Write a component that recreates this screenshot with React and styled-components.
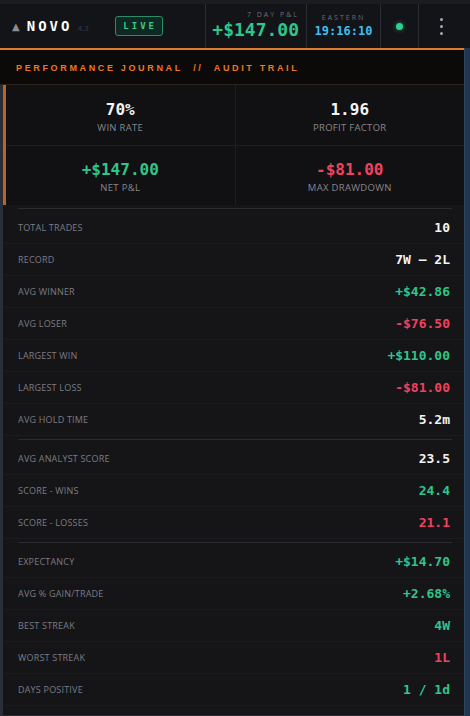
import React from 'react';
import styled, { createGlobalStyle } from 'styled-components';

const mono = `'DejaVu Sans Mono', 'Liberation Mono', monospace`;
const sans = `'Open Sans', 'Noto Sans', sans-serif`;

const GREEN = '#2fc58b';
const RED = '#f0425e';
const WHITE = '#f3f3f3';

const GlobalStyle = createGlobalStyle`
    html, body {
        margin: 0;
        padding: 0;
        height: 716px;
        overflow: hidden;
        background: #141519;
    }
    * { box-sizing: border-box; }
`;

const stats = [
    { value: '70%', label: 'Win Rate', tone: 'white' },
    { value: '1.96', label: 'Profit Factor', tone: 'white' },
    { value: '+$147.00', label: 'Net P&L', tone: 'green' },
    { value: '-$81.00', label: 'Max Drawdown', tone: 'red' },
];

const groups = [
    [
        ['Total Trades', '10', 'white'],
        ['Record', '7W – 2L', 'white'],
        ['Avg Winner', '+$42.86', 'green'],
        ['Avg Loser', '-$76.50', 'red'],
        ['Largest Win', '+$110.00', 'green'],
        ['Largest Loss', '-$81.00', 'red'],
        ['Avg Hold Time', '5.2m', 'white'],
    ],
    [
        ['Avg Analyst Score', '23.5', 'white'],
        ['Score - Wins', '24.4', 'green'],
        ['Score - Losses', '21.1', 'red'],
    ],
    [
        ['Expectancy', '+$14.70', 'green'],
        ['Avg % Gain/Trade', '+2.68%', 'green'],
        ['Best Streak', '4W', 'green'],
        ['Worst Streak', '1L', 'red'],
        ['Days Positive', '1 / 1d', 'green'],
    ],
];

const toneColor = tone => (tone === 'green' ? GREEN : tone === 'red' ? RED : WHITE);

const App = () => (
    <>
        <GlobalStyle />
        <Frame>
            <Header>
                <Brand>
                    <Caret>▲</Caret>
                    <Logo>NOVO</Logo>
                    <Version>4.3</Version>
                    <LiveBadge>LIVE</LiveBadge>
                </Brand>
                <PnlCell>
                    <TinyLabel>7 DAY P&amp;L</TinyLabel>
                    <PnlValue>+$147.00</PnlValue>
                </PnlCell>
                <ClockCell>
                    <TinyLabel>EASTERN</TinyLabel>
                    <Clock>19:16:10</Clock>
                </ClockCell>
                <DotCell>
                    <StatusDot />
                </DotCell>
                <MenuCell>
                    <span /><span /><span />
                </MenuCell>
            </Header>
            <Scroller>
                <Content>
                    <TitleBar>PERFORMANCE JOURNAL&nbsp;&nbsp;//&nbsp;&nbsp;AUDIT TRAIL</TitleBar>
                    <Body>
                        <StatGrid>
                            {stats.map(s => (
                                <StatCell key={s.label}>
                                    <StatValue tone={s.tone}>{s.value}</StatValue>
                                    <StatLabel>{s.label}</StatLabel>
                                </StatCell>
                            ))}
                        </StatGrid>
                        <Rows>
                            {groups.map((rows, gi) => (
                                <React.Fragment key={gi}>
                                    <Separator />
                                    {rows.map(([label, value, tone]) => (
                                        <Row key={label}>
                                            <RowLabel>{label}</RowLabel>
                                            <RowValue tone={tone}>{value}</RowValue>
                                        </Row>
                                    ))}
                                </React.Fragment>
                            ))}
                        </Rows>
                    </Body>
                </Content>
                <ScrollTrack />
            </Scroller>
        </Frame>
    </>
);

const Frame = styled.div`
    width: 470px;
    height: 716px;
    display: flex;
    flex-direction: column;
    background: #141519;
`;

const Header = styled.header`
    height: 48px;
    flex: none;
    display: flex;
    align-items: stretch;
    background: #131418;
    border-top: 4px solid #1b1c20;
    > * + * {
        border-left: 1px solid #2a2b31;
    }
`;

const Brand = styled.div`
    width: 205px;
    display: flex;
    align-items: center;
    padding-left: 12px;
`;

const Caret = styled.span`
    color: #8b8d93;
    font-size: 10px;
    font-family: 'DejaVu Sans', sans-serif;
    margin-right: 7px;
    margin-top: 1px;
`;

const Logo = styled.span`
    font-family: ${mono};
    font-weight: 700;
    font-size: 14px;
    letter-spacing: 3px;
    color: #ffffff;
`;

const Version = styled.span`
    font-family: ${sans};
    font-size: 8px;
    color: #3a3b41;
    margin-left: 5px;
    margin-top: 2px;
`;

const LiveBadge = styled.span`
    margin-left: 26px;
    width: 48px;
    height: 20px;
    display: flex;
    align-items: center;
    justify-content: center;
    border: 1px solid #2d8c68;
    border-radius: 3px;
    background: #0f2822;
    color: #3ccb8e;
    font-family: ${mono};
    font-weight: 700;
    font-size: 9px;
    letter-spacing: 3px;
    padding-left: 3px;
`;

const TinyLabel = styled.span`
    font-family: ${sans};
    font-size: 7px;
    letter-spacing: 2px;
    color: #6b6d73;
    line-height: 9px;
`;

const PnlCell = styled.div`
    width: 101px;
    display: flex;
    flex-direction: column;
    align-items: flex-end;
    justify-content: center;
    padding-right: 7px;
    padding-bottom: 2px;
`;

const PnlValue = styled.span`
    font-family: ${mono};
    font-weight: 700;
    font-size: 18px;
    line-height: 22px;
    color: ${GREEN};
`;

const ClockCell = styled.div`
    width: 74px;
    display: flex;
    flex-direction: column;
    align-items: center;
    justify-content: center;
    gap: 2px;
    padding-bottom: 2px;
`;

const Clock = styled.span`
    font-family: ${mono};
    font-weight: 700;
    font-size: 12px;
    line-height: 14px;
    color: #3cbff0;
`;

const DotCell = styled.div`
    width: 38px;
    display: flex;
    align-items: center;
    justify-content: center;
`;

const StatusDot = styled.span`
    width: 7px;
    height: 7px;
    border-radius: 50%;
    background: #2fd08f;
    box-shadow: 0 0 5px rgba(47, 208, 143, 0.6);
`;

const MenuCell = styled.div`
    flex: 1;
    display: flex;
    flex-direction: column;
    align-items: center;
    justify-content: center;
    gap: 4px;
    padding-right: 7px;
    span {
        width: 3px;
        height: 3px;
        border-radius: 50%;
        background: #a3a8b2;
    }
`;

const Scroller = styled.div`
    flex: 1;
    display: flex;
    min-height: 0;
`;

const Content = styled.div`
    flex: 1;
    display: flex;
    flex-direction: column;
`;

const ScrollTrack = styled.div`
    width: 6px;
    flex: none;
    background: #23364d;
    border-left: 1px solid #2c4563;
`;

const TitleBar = styled.div`
    height: 37px;
    display: flex;
    align-items: center;
    padding-left: 16px;
    padding-top: 1px;
    background: #0c0a09;
    border-top: 2px solid #e37b2c;
    border-bottom: 1px solid #2f2219;
    color: #ec7628;
    font-family: 'Liberation Sans', Arial, sans-serif;
    font-weight: 700;
    font-size: 9px;
    letter-spacing: 2.65px;
`;

const Body = styled.div`
    flex: 1;
    display: flex;
    flex-direction: column;
    background: #151518;
    border-left: 3px solid #2a2f37;
    border-bottom: 1px solid #2b2c31;
    padding-bottom: 8px;
`;

const StatGrid = styled.div`
    display: grid;
    grid-template-columns: 1fr 1fr;
    grid-template-rows: 1fr 1fr;
    border-left: 3px solid #b8652c;
    gap: 1px;
    background-color: #1d1e22;
    height: 120px;
`;

const StatCell = styled.div`
    display: flex;
    flex-direction: column;
    align-items: center;
    justify-content: center;
    gap: 3px;
    background: #111114;
    padding-top: 5px;
`;

const StatValue = styled.span`
    font-family: ${mono};
    font-weight: 700;
    font-size: 16px;
    line-height: 18px;
    color: ${p => toneColor(p.tone)};
`;

const StatLabel = styled.span`
    font-family: ${sans};
    font-size: 9.5px;
    line-height: 12px;
    letter-spacing: 0.3px;
    text-transform: uppercase;
    color: #85878d;
`;

const Rows = styled.div`
    display: flex;
    flex-direction: column;
`;

const Separator = styled.div`
    height: 1px;
    margin: 3px 12px 3px 15px;
    background: #2b2c31;
`;

const Row = styled.div`
    height: 32px;
    display: flex;
    align-items: center;
    justify-content: space-between;
    padding: 0 14px 0 15px;
    border-bottom: 1px solid #1b1b1f;
`;

const RowLabel = styled.span`
    font-family: ${sans};
    font-size: 9px;
    letter-spacing: 0.2px;
    text-transform: uppercase;
    color: #7b7c82;
`;

const RowValue = styled.span`
    font-family: ${mono};
    font-weight: 700;
    font-size: 13px;
    color: ${p => toneColor(p.tone)};
`;

export default App;
